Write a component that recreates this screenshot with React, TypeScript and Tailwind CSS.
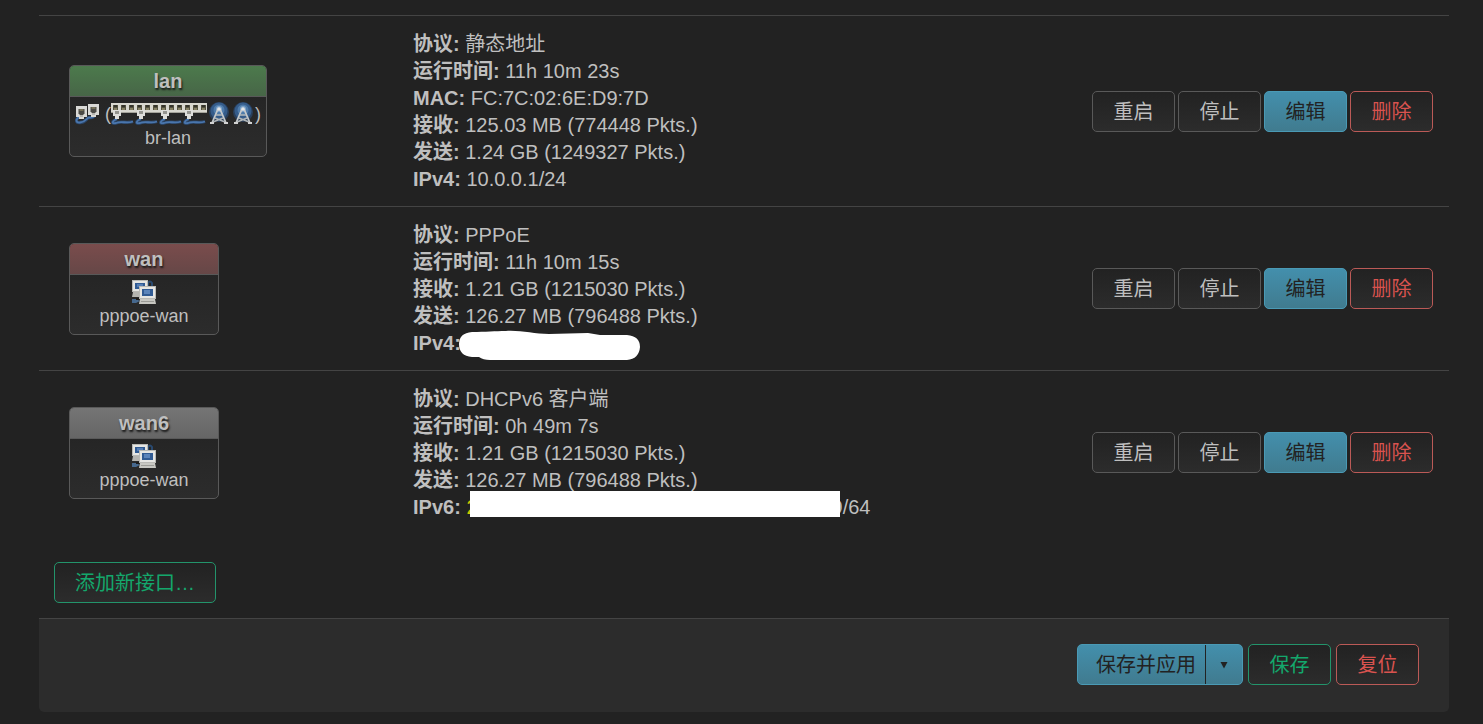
import React from "react";

type Device = { kind: "bridge" | "tunnel"; name: string };
type Detail = { label: string; value: React.ReactNode };
type Iface = { name: string; head: string; device: Device; details: Detail[] };

function Plug({ x, y }: { x: number; y: number }) {
  return (
    <g transform={`translate(${x} ${y})`}>
      <path d="M0 0H11V11H8V13H3V11H0Z" fill="#d9d9d6" />
      <path d="M2.5 3H8.5V8H7.5V9H3.5V8H2.5Z" fill="#4a4a46" />
      <path d="M3.5 3H7.5V5H3.5Z" fill="#77725a" />
      <path d="M4 9H7V11H4Z" fill="#b5b5b1" />
    </g>
  );
}

function BridgeIcon() {
  return (
    <svg width="24" height="24" viewBox="0 0 24 24" className="shrink-0" aria-hidden="true">
      <path d="M4 15C0 18 1 21 5 20.500C12 20 11 15 15 15.500C19 16 20 14 19 11" fill="none" stroke="#2b4566" strokeWidth="3.4" />
      <path d="M4 15C0 18 1 21 5 20.500C12 20 11 15 15 15.500C19 16 20 14 19 11" fill="none" stroke="#4a76ad" strokeWidth="1.800" />
      <Plug x={1} y={4} />
      <Plug x={13} y={2} />
    </svg>
  );
}

function SwitchIcon() {
  return (
    <svg width="24" height="24" viewBox="0 0 24 24" className="shrink-0" aria-hidden="true">
      <path d="M6 17C1 19 0 22 5 21C11 18.500 15 22 22 19.500" fill="none" stroke="#2b4566" strokeWidth="3.4" />
      <path d="M6 17C1 19 0 22 5 21C11 18.500 15 22 22 19.500" fill="none" stroke="#4a76ad" strokeWidth="1.800" />
      <path d="M0 1H24V11H0Z" fill="#d8d7cf" />
      <path d="M0 10H24V11H0Z" fill="#a5a49c" />
      <path d="M2 3H7V8H2ZM10 3H15V8H10ZM18 3H23V8H18Z" fill="#54523f" />
      <path d="M3 3H6V5H3ZM11 3H14V5H11ZM19 3H22V5H19Z" fill="#34332b" />
      <path d="M3 6H6V8H3ZM11 6H14V8H11ZM19 6H22V8H19Z" fill="#858063" />
      <path d="M2 8H10V14H8V17H4V14H2Z" fill="#dededb" />
      <path d="M4 9H8V12H4Z" fill="#94948f" />
    </svg>
  );
}

function WifiIcon() {
  return (
    <svg width="24" height="24" viewBox="0 0 24 24" className="shrink-0" aria-hidden="true">
      <circle cx="12" cy="10" r="10" fill="#293f5b" />
      <circle cx="12" cy="9" r="8.500" fill="#355c8a" />
      <circle cx="12" cy="8" r="5.500" fill="#4f7cab" />
      <circle cx="12" cy="7" r="3" fill="#80a5cb" />
      <path d="M11 7L5 21M13 7L19 21" stroke="#c5c9cb" strokeWidth="1.800" fill="none" />
      <path d="M9 13H15M8 16L18 20M16 16L6 20" stroke="#b0b5b8" strokeWidth="1.400" fill="none" />
      <circle cx="12" cy="7" r="1.800" fill="#e3e5e6" />
      <path d="M3 20H7V22H3ZM17 20H21V22H17Z" fill="#d2d2d2" />
    </svg>
  );
}

function TunnelIcon() {
  return (
    <svg width="24" height="24" viewBox="0 0 24 24" className="shrink-0" aria-hidden="true">
      <path d="M16 6V3Q18 0 20 3V6" fill="none" stroke="#29496f" strokeWidth="2" />
      <path d="M0 0H16V12H0Z" fill="#b9b9b5" />
      <path d="M1 1H15V11H1Z" fill="#e6e6e3" />
      <path d="M3 3H13V9H3Z" fill="#315b93" />
      <path d="M5 4H11V7H5Z" fill="#557eb5" />
      <path d="M1 12H9V17H0Z" fill="#b4b4b0" />
      <path d="M0 19H4L8 21L4 23H0Z" fill="#46688d" />
      <path d="M4 18H8V20H4Z" fill="#1b1b1b" />
      <path d="M7 6H24V19H7Z" fill="#b9b9b5" />
      <path d="M8 7H23V18H8Z" fill="#e6e6e3" />
      <path d="M10 9H21V16H10Z" fill="#315b93" />
      <path d="M12 10H18V14H12Z" fill="#5b84ba" />
      <path d="M8 19H23L24 24H7Z" fill="#c7c7c2" />
      <path d="M9 21.500H22" stroke="#9a9a95" strokeWidth="1" />
    </svg>
  );
}

const HiddenV4 = () => (
  <span className="relative inline-block">
    <svg width="184" height="31" viewBox="0 0 184 31" className="absolute -left-2 -top-5" aria-label="hidden">
      <path
        d="M14 2C28 2 37 1 48 1C62 0 76 4 91 4L130 3Q136 4 142 5H169Q182 6 182 17Q181 29 169 30H32Q25 30 21 27H14Q1 26 1 14Q1 3 14 2Z"
        fill="#ffffff"
      />
    </svg>
  </span>
);

const HiddenV6 = () => (
  <>
    <span className="text-[#cccc00]">2</span>
    <span className="relative inline-block w-[361px]">
      <span className="absolute -left-2 -top-[23px] h-[26px] w-[370px] bg-white" />
    </span>
    <span className="-ml-[7px]">9/64</span>
  </>
);

const interfaces: Iface[] = [
  {
    name: "lan",
    head: "from-[#4c7a4c] to-[#476647]",
    device: { kind: "bridge", name: "br-lan" },
    details: [
      { label: "协议", value: "静态地址" },
      { label: "运行时间", value: "11h 10m 23s" },
      { label: "MAC", value: "FC:7C:02:6E:D9:7D" },
      { label: "接收", value: "125.03 MB (774448 Pkts.)" },
      { label: "发送", value: "1.24 GB (1249327 Pkts.)" },
      { label: "IPv4", value: "10.0.0.1/24" },
    ],
  },
  {
    name: "wan",
    head: "from-[#7a4c4c] to-[#664747]",
    device: { kind: "tunnel", name: "pppoe-wan" },
    details: [
      { label: "协议", value: "PPPoE" },
      { label: "运行时间", value: "11h 10m 15s" },
      { label: "接收", value: "1.21 GB (1215030 Pkts.)" },
      { label: "发送", value: "126.27 MB (796488 Pkts.)" },
      { label: "IPv4", value: <HiddenV4 /> },
    ],
  },
  {
    name: "wan6",
    head: "from-[#757575] to-[#666666]",
    device: { kind: "tunnel", name: "pppoe-wan" },
    details: [
      { label: "协议", value: "DHCPv6 客户端" },
      { label: "运行时间", value: "0h 49m 7s" },
      { label: "接收", value: "1.21 GB (1215030 Pkts.)" },
      { label: "发送", value: "126.27 MB (796488 Pkts.)" },
      { label: "IPv6", value: <HiddenV6 /> },
    ],
  },
];

const tones = {
  neutral: "border-[#595959] bg-linear-to-b from-[#222222] to-[#2c2c2c] text-[#bfbfbf]",
  action: "border-[#4a9ab5] bg-linear-to-b from-[#438fac] to-[#407b8f] text-[#222222]",
  danger: "border-[#bb5a57] bg-linear-to-b from-[#222222] to-[#2c2c2c] text-[#d9534f]",
  positive: "border-[#23946b] bg-linear-to-b from-[#222222] to-[#2c2c2c] text-[#14a76c]",
};

function Button({ tone, wide, children }: { tone: keyof typeof tones; wide?: boolean; children: React.ReactNode }) {
  return (
    <button
      type="button"
      className={`h-[41px] whitespace-nowrap rounded-[5px] border pt-0.5 ${wide ? "px-5" : "w-[83px]"} ${tones[tone]}`}
    >
      {children}
    </button>
  );
}

function InterfaceBox({ iface }: { iface: Iface }) {
  return (
    <div className="inline-flex min-w-[150px] flex-col overflow-hidden rounded-[5px] border border-[#595959] bg-linear-to-b from-[#222222] to-[#2c2c2c] text-center align-middle">
      <div
        className={`h-[31px] border-b border-[#595959] bg-linear-to-b text-[20px] font-bold leading-[30px] [text-shadow:1px_2px_2px_#1a1a1a] ${iface.head}`}
      >
        {iface.name}
      </div>
      <div className="flex h-[59px] flex-col px-[5px] pt-[5px] text-lg">
        <div className="flex h-6 items-center justify-center">
          {iface.device.kind === "tunnel" ? (
            <TunnelIcon />
          ) : (
            <>
              <BridgeIcon />
              <span className="ml-1.5">(</span>
              <SwitchIcon />
              <SwitchIcon />
              <SwitchIcon />
              <SwitchIcon />
              <WifiIcon />
              <WifiIcon />
              <span>)</span>
            </>
          )}
        </div>
        <div className="leading-6">{iface.device.name}</div>
      </div>
    </div>
  );
}

export default function App() {
  return (
    <div className="min-h-screen bg-[#222222] pb-3 pl-[39px] pr-[34px] pt-[15px] font-['Liberation_Sans','Noto_Sans_CJK_SC',sans-serif] text-[20px] leading-[27px] text-[#bfbfbf]">
      <main>
        <table className="w-full border-collapse">
          <tbody>
            {interfaces.map((iface) => (
              <tr key={iface.name} className="border-t border-[#444444]">
                <td className="w-[359px] py-3.5 pl-[30px] align-middle">
                  <InterfaceBox iface={iface} />
                </td>
                <td className="px-[15px] pb-[13px] pt-[15px] align-middle">
                  {iface.details.map((d) => (
                    <div key={d.label} className="h-[27px] whitespace-nowrap">
                      <strong>{d.label}:</strong> {d.value}
                    </div>
                  ))}
                </td>
                <td className="py-3.5 pr-4 align-middle">
                  <div className="flex justify-end gap-[3px]">
                    <Button tone="neutral">重启</Button>
                    <Button tone="neutral">停止</Button>
                    <Button tone="action">编辑</Button>
                    <Button tone="danger">删除</Button>
                  </div>
                </td>
              </tr>
            ))}
          </tbody>
        </table>
        <div className="px-[15px] pb-[15px] pt-7">
          <Button tone="positive" wide>
            添加新接口…
          </Button>
        </div>
      </main>
      <footer className="flex justify-end gap-[5px] rounded-b-[5px] border-t border-[#444444] bg-[#2c2c2c] px-[30px] pb-[27px] pt-[25px]">
        <div className="flex h-[41px] overflow-hidden rounded-[5px] border border-[#4a9ab5] bg-linear-to-b from-[#438fac] to-[#407b8f] text-[#222222]">
          <button type="button" className="whitespace-nowrap border-r border-[#222222] pl-[18px] pr-[9px] pt-0.5">
            保存并应用
          </button>
          <button type="button" aria-label="更多" className="flex w-9 items-center justify-center">
            <svg width="8" height="8" viewBox="0 0 8 8" aria-hidden="true">
              <path d="M0.500 1H7.500L4 7.500Z" fill="#222222" />
            </svg>
          </button>
        </div>
        <Button tone="positive">保存</Button>
        <Button tone="danger">复位</Button>
      </footer>
    </div>
  );
}
